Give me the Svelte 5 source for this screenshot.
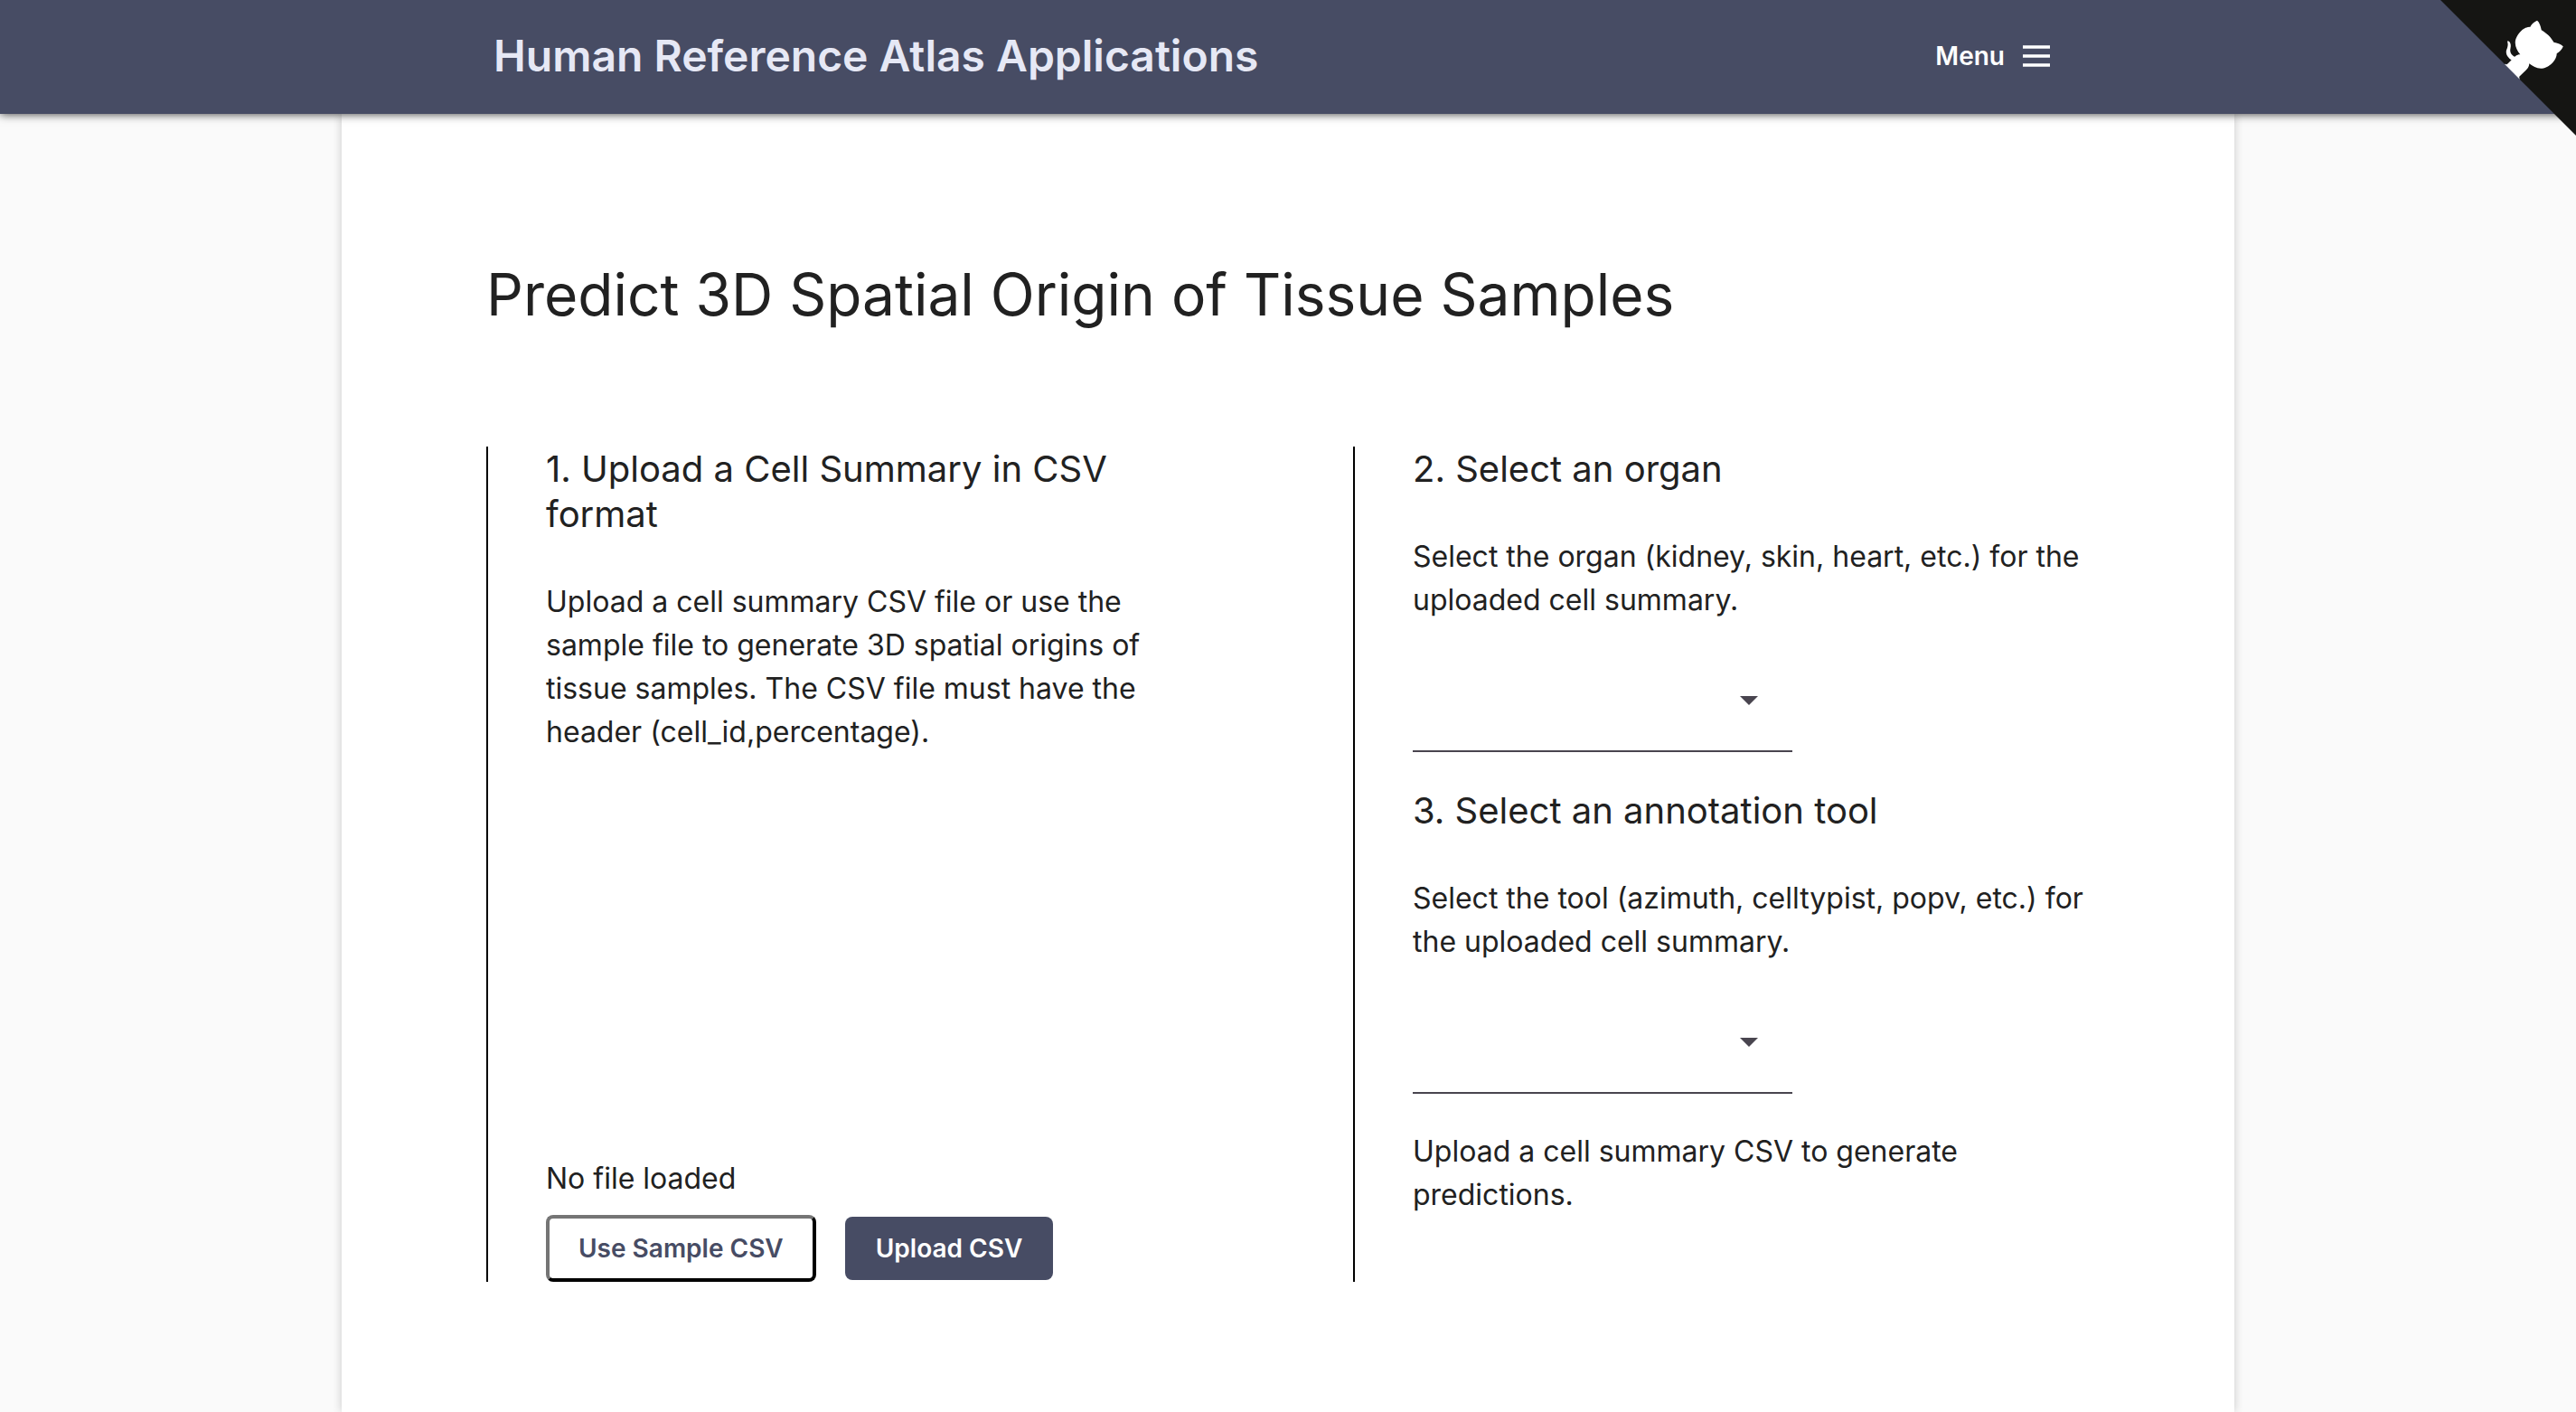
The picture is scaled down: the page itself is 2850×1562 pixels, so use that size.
<script>
  let organ = $state('');
  let tool = $state('');
</script>

<header class="bar">
  <div class="bar-inner">
    <a class="brand" href="#top">Human Reference Atlas Applications</a>
    <button class="menu" type="button">
      Menu
      <svg viewBox="0 0 30 24" width="30" height="24" aria-hidden="true">
        <path d="M0 2h30M0 12h30M0 22h30" stroke="currentColor" stroke-width="3.4" />
      </svg>
    </button>
  </div>
  <a class="corner" href="#source" aria-label="View source on GitHub">
    <svg viewBox="4.5 4.5 234 234" width="150" height="150" aria-hidden="true">
      <path fill="#151513" d="M0,0 L115,115 L130,115 L142,142 L250,250 L250,0 Z" />
      <path fill="#fff" d="M128.3,109.0 C113.8,99.7 119.0,89.6 119.0,89.6 C122.0,82.7 120.5,78.6 120.5,78.6 C119.2,72.0 123.4,76.3 123.4,76.3 C127.3,80.9 125.5,87.3 125.5,87.3 C122.9,97.6 130.6,101.9 134.4,103.2" />
      <path fill="#fff" d="M115.0,115.0 C114.9,115.1 118.7,116.5 119.8,115.4 L133.7,101.6 C136.9,99.2 139.9,98.4 142.2,98.6 C133.8,88.0 127.5,74.4 143.8,58.0 C148.5,53.4 154.0,51.2 159.7,51.0 C160.3,49.4 163.2,43.6 171.4,40.1 C171.4,40.1 176.1,42.5 178.8,56.2 C183.1,58.6 187.2,61.8 190.9,65.4 C194.5,69.0 197.7,73.2 200.1,77.6 C213.8,80.2 216.3,84.9 216.3,84.9 C212.7,93.1 206.9,96.0 205.4,96.6 C205.1,102.4 203.0,107.8 198.3,112.5 C181.9,128.9 168.3,122.5 157.7,114.1 C157.9,116.9 156.7,120.9 152.7,124.9 L141.0,136.5 C139.8,137.7 141.6,141.9 141.8,141.8 Z" />
    </svg>
  </a>
</header>

<main class="card">
  <h1>Predict 3D Spatial Origin of Tissue Samples</h1>

  <div class="columns">
    <section class="column">
      <h2>1. Upload a Cell Summary in CSV format</h2>
      <p>
        Upload a cell summary CSV file or use the sample file to generate 3D spatial origins of
        tissue samples. The CSV file must have the header (cell_id,percentage).
      </p>
      <div class="upload">
        <p class="status">No file loaded</p>
        <div class="actions">
          <button class="sample" type="button">Use Sample CSV</button>
          <button class="primary" type="button">Upload CSV</button>
        </div>
      </div>
    </section>

    <section class="column">
      <h2><label for="organ">2. Select an organ</label></h2>
      <p>Select the organ (kidney, skin, heart, etc.) for the uploaded cell summary.</p>
      <div class="field">
        <select id="organ" bind:value={organ}>
          <option value=""></option>
        </select>
        <svg viewBox="0 0 20 10" width="20" height="10" aria-hidden="true">
          <path d="M0 0h20L10 10z" fill="currentColor" />
        </svg>
      </div>

      <h2><label for="tool">3. Select an annotation tool</label></h2>
      <p>Select the tool (azimuth, celltypist, popv, etc.) for the uploaded cell summary.</p>
      <div class="field">
        <select id="tool" bind:value={tool}>
          <option value=""></option>
        </select>
        <svg viewBox="0 0 20 10" width="20" height="10" aria-hidden="true">
          <path d="M0 0h20L10 10z" fill="currentColor" />
        </svg>
      </div>

      <p>Upload a cell summary CSV to generate predictions.</p>
    </section>
  </div>
</main>

<style>
  :global(body) {
    background: #fafafa;
    color: #212121;
    font-family: Inter, 'Liberation Sans', sans-serif;
    font-size: 32px;
    line-height: 48px;
  }

  :global(#app) {
    display: flex;
    flex-direction: column;
    min-height: 100vh;
  }

  h1,
  h2,
  p {
    margin: 0;
    font-weight: 400;
  }

  button,
  select {
    font-family: inherit;
    cursor: pointer;
  }

  .bar {
    position: relative;
    z-index: 1;
    background: #474c64;
    box-shadow: 0 0 10px rgba(0, 0, 0, 0.8);
  }

  .bar-inner {
    box-sizing: border-box;
    display: flex;
    align-items: center;
    justify-content: space-between;
    width: 100%;
    max-width: 1766px;
    min-height: 126px;
    margin: 0 auto;
    padding: 0 40px 2px 4px;
  }

  .brand {
    color: #e6e8f5;
    font-size: 48px;
    font-weight: 600;
    text-decoration: none;
  }

  .menu {
    display: flex;
    align-items: center;
    gap: 20px;
    padding: 0;
    border: 0;
    background: none;
    color: #fff;
    font-size: 28px;
    font-weight: 600;
  }

  .corner {
    position: absolute;
    top: 0;
    right: 0;
  }

  .corner svg {
    display: block;
  }

  .card {
    box-sizing: border-box;
    flex: 1;
    width: 100%;
    max-width: 2094px;
    margin: 0 auto;
    padding: 160px 160px 144px;
    background: #fff;
    box-shadow: 0 0 10px rgba(0, 0, 0, 0.2);
  }

  h1 {
    margin-bottom: 128px;
    font-size: 64px;
    line-height: 80px;
  }

  h2 {
    margin-bottom: 48px;
    font-size: 40px;
    line-height: 50px;
  }

  .columns {
    display: grid;
    grid-template-columns: 1fr 1fr;
    gap: 144px;
  }

  .column {
    display: flex;
    flex-direction: column;
    min-height: 924px;
    box-sizing: border-box;
    padding-left: 64px;
    border-left: 2px solid #000;
  }

  .upload {
    margin-top: auto;
  }

  .status {
    margin-bottom: 16px;
  }

  .actions {
    display: flex;
    align-items: center;
    gap: 32px;
  }

  .actions button {
    border-radius: 8px;
    font-size: 28px;
    font-weight: 600;
    line-height: 34px;
  }

  .sample {
    padding: 16px 32px;
    border: 4px outset #212121;
    background: #fff;
    color: #474c64;
  }

  .primary {
    padding: 18px 34px;
    border: 0;
    background: #474c64;
    color: #fff;
  }

  .field {
    display: flex;
    align-items: center;
    width: 420px;
    box-sizing: border-box;
    height: 112px;
    margin: 32px 0 40px;
    padding-right: 38px;
    border-bottom: 2px solid #49454f;
    color: #49454f;
  }

  .field select {
    flex: 1;
    height: 100%;
    border: 0;
    appearance: none;
    background: none;
    font-size: 32px;
  }
</style>
